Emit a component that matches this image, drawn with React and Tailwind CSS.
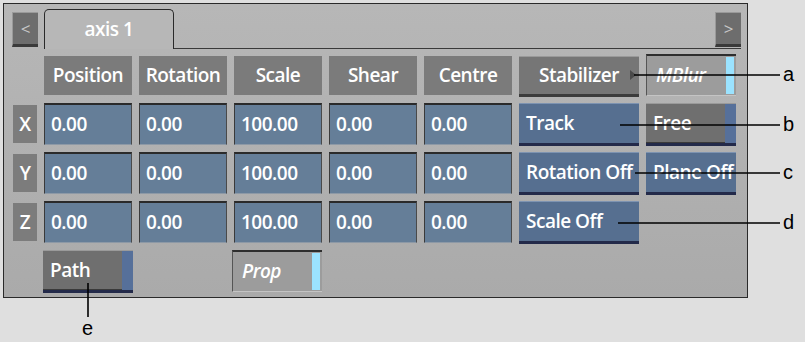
import React from "react";

const F = { fontFamily: '"Open Sans", "Noto Sans", sans-serif' };
const TXT = "text-white text-[19px] font-semibold tracking-[-0.5px]";

function Head({ children }) {
  return (
    <div className={`h-[39px] bg-[#7b7b7b] flex items-center justify-center ${TXT}`} style={F}>
      {children}
    </div>
  );
}

function Axis({ children }) {
  return (
    <div className={`h-[38px] mt-[2px] bg-[#7c7c7c] flex items-center justify-center ${TXT}`} style={F}>
      {children}
    </div>
  );
}

function Field({ children }) {
  return (
    <div className={`h-[42px] bg-[#657e98] border-t-2 border-t-[#2a2a2a] border-l border-l-[#3a3a3a] border-r border-r-[#4a4a4a] border-b border-b-[#8d99a6] flex items-center pl-[6px] ${TXT}`} style={F}>
      {children}
    </div>
  );
}

function BlueBtn({ children }) {
  return (
    <div className={`h-[43px] bg-[#566f90] border-t border-t-[#7d93b1] border-b-[3px] border-b-[#232a4a] flex items-center pl-[7px] whitespace-nowrap overflow-hidden ${TXT}`} style={F}>
      {children}
    </div>
  );
}

function GrayBlue({ children }) {
  return (
    <div className="h-[43px] flex border-t border-t-[#9a9a9a] border-b-[3px] border-b-[#232a4a]">
      <div className={`flex-1 bg-[#6f6f6f] border-b border-b-[#3a3a3a] flex items-center pl-[7px] whitespace-nowrap overflow-hidden ${TXT}`} style={F}>
        {children}
      </div>
      <div className="w-[11px] bg-[#56709a]" />
    </div>
  );
}

function Toggle({ children }) {
  return (
    <div className="h-[42px] flex bg-[#9c9c9c] border-t-2 border-t-[#2e2e2e] border-l border-l-[#555] border-b border-b-[#c4c4c4] pr-[2px]">
      <div className={`flex-1 flex items-center pl-[9px] italic ${TXT}`} style={F}>
        {children}
      </div>
      <div className="w-[8px] bg-[#9be3ff] my-[1px]" />
    </div>
  );
}

function Arrow({ children }) {
  return (
    <div className="w-[26px] h-[35px] bg-[#6d6d6d] border-t border-l border-[#9a9a9a] border-b-[3px] border-b-[#3a3a3a] flex items-center justify-center text-[#c8c8c8] text-[17px]" style={F}>
      {children}
    </div>
  );
}

const COLS = "grid grid-cols-[24px_88px_88px_88px_88px_88px_120px_90px] gap-x-[7px] pl-[9px]";
const LBL = { fontFamily: '"Liberation Sans", Arial, sans-serif' };

export default function App() {
  const rows = [
    ["X", "Track", "free"],
    ["Y", "Rotation Off", "plane"],
    ["Z", "Scale Off", null],
  ];
  return (
    <div className="w-[805px] h-[342px] bg-[#dfdfdf] relative overflow-hidden">
      <div className="ml-[3px] mt-[3px] w-[745px] h-[295px] border border-[#2a2a2a] bg-gradient-to-b from-[#b7b7b7] to-[#aaaaaa]">
        {/* tab row */}
        <div className="flex items-end h-[45px] pl-[8px] pr-[6px]">
          <div className="self-start mt-[8px]">
            <Arrow>&lt;</Arrow>
          </div>
          <div className={`ml-[6px] w-[130px] h-[40px] bg-[#b7b7b7] border border-b-0 border-[#2a2a2a] rounded-t-[5px] flex items-center justify-center ${TXT}`} style={F}>
            axis 1
          </div>
          <div className="flex-1 h-[40px] border-b border-[#3a3a3a] flex justify-end items-start pt-[3px]">
            <Arrow>&gt;</Arrow>
          </div>
        </div>

        {/* header grid */}
        <div className={`${COLS} mt-[7px]`}>
          <div />
          <Head>Position</Head>
          <Head>Rotation</Head>
          <Head>Scale</Head>
          <Head>Shear</Head>
          <Head>Centre</Head>
          <div className={`h-[41px] bg-[#767676] border-t border-t-[#9a9a9a] border-b-[3px] border-b-[#3c3c3c] flex items-center justify-center relative ${TXT}`} style={F}>
            Stabilizer
            <svg className="absolute right-[3px] top-[13px]" width="6" height="10" viewBox="0 0 6 10">
              <path d="M0 0 L6 5 L0 10 Z" fill="#4a4a4a" />
            </svg>
          </div>
          <div className="-mt-[2px]">
            <Toggle>MBlur</Toggle>
          </div>
        </div>

        {rows.map(([ax, btn, extra]) => (
          <div key={ax} className={`${COLS} mt-[6px]`}>
            <Axis>{ax}</Axis>
            <Field>0.00</Field>
            <Field>0.00</Field>
            <Field>100.00</Field>
            <Field>0.00</Field>
            <Field>0.00</Field>
            <BlueBtn>{btn}</BlueBtn>
            {extra === "free" ? (
              <GrayBlue>Free</GrayBlue>
            ) : extra === "plane" ? (
              <BlueBtn>Plane Off</BlueBtn>
            ) : (
              <div />
            )}
          </div>
        ))}

        <div className={`${COLS} mt-[6px]`}>
          <div />
          <div className="-ml-[1px] w-[90px]">
            <GrayBlue>Path</GrayBlue>
          </div>
          <div />
          <div className="-ml-[2px] w-[90px]">
            <Toggle>Prop</Toggle>
          </div>
        </div>
      </div>

      {/* callouts */}
      <svg className="absolute left-0 top-0 pointer-events-none" width="805" height="342">
        <g stroke="#000" strokeWidth="1.6">
          <line x1="634" y1="75" x2="780" y2="75" />
          <line x1="620" y1="125" x2="780" y2="125" />
          <line x1="635" y1="173" x2="780" y2="173" />
          <line x1="618" y1="223" x2="780" y2="223" />
          <line x1="88" y1="283" x2="88" y2="317" />
        </g>
      </svg>
      <div className="absolute left-[783px] top-[62px] text-black text-[20px] leading-[24px]" style={LBL}>a</div>
      <div className="absolute left-[783px] top-[112px] text-black text-[20px] leading-[24px]" style={LBL}>b</div>
      <div className="absolute left-[783px] top-[160px] text-black text-[20px] leading-[24px]" style={LBL}>c</div>
      <div className="absolute left-[783px] top-[210px] text-black text-[20px] leading-[24px]" style={LBL}>d</div>
      <div className="absolute left-[82px] top-[316px] text-black text-[20px] leading-[24px]" style={LBL}>e</div>
    </div>
  );
}
